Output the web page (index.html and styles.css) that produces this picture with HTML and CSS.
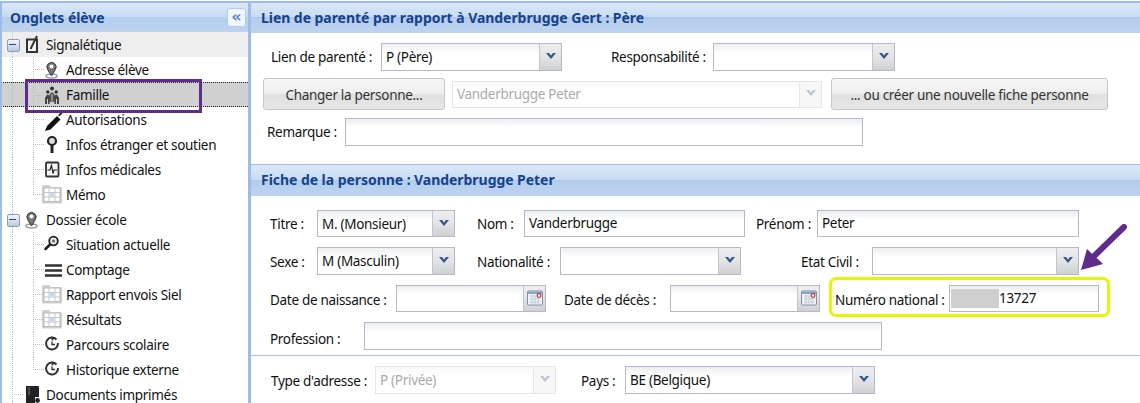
FILE: index.html
```html
<!DOCTYPE html>
<html lang="fr">
<head>
<meta charset="utf-8">
<title>Onglets élève</title>
<link rel="stylesheet" href="styles.css">
</head>
<body>
<svg class="sprite" xmlns="http://www.w3.org/2000/svg">
  <symbol id="i-sign" viewBox="0 0 20 20" overflow="visible"><rect x="3" y="4.5" width="10" height="12.500" fill="#f4f4f4" stroke="#333" stroke-width="2"/><path d="M6.500 14 L13 1" stroke="#333" stroke-width="2" fill="none"/></symbol>
  <symbol id="i-pin" viewBox="0 0 20 20" overflow="visible"><ellipse cx="7.500" cy="16" rx="5.500" ry="2" fill="none" stroke="#999" stroke-width="1.500"/><path d="M7.500 16 L3.600 9.500 A4.600 4.600 0 1 1 11.400 9.500 Z" fill="#777" stroke="#333" stroke-width="1"/><circle cx="7.500" cy="6.500" r="2" fill="#fff"/></symbol>
  <symbol id="i-fam" viewBox="0 0 20 20" overflow="visible"><circle cx="8" cy="3.500" r="2" fill="#333"/><path d="M5 11 Q8 3.500 11 11 L10.500 17 H5.500 Z" fill="#555"/><circle cx="3.800" cy="7" r="1.700" fill="#333"/><path d="M1 19 V13 Q3.500 6.500 6 12 L5.500 19 H4 V14 H3 V19 Z" fill="#444"/><circle cx="12.200" cy="7" r="1.700" fill="#333"/><path d="M10 12 Q12.500 6.500 15 13 V19 H13 V14 H12 V19 H10.500 Z" fill="#444"/><path d="M8 9 V17" stroke="#ddd" stroke-width=".8"/></symbol>
  <symbol id="i-mark" viewBox="0 0 20 20" overflow="visible"><path d="M1 21 L3 16 L13 6 L16.500 9.500 L6.500 19.500 Z" fill="#111"/><path d="M14 5 L17 2 L18.500 3.500 L15.500 6.500 Z" fill="#333"/></symbol>
  <symbol id="i-key" viewBox="0 0 20 20" overflow="visible"><circle cx="8" cy="6" r="4" fill="#ddd" stroke="#222" stroke-width="2.200"/><path d="M8 10 V18" stroke="#222" stroke-width="3"/></symbol>
  <symbol id="i-med" viewBox="0 0 20 20" overflow="visible"><rect x="2" y="2.500" width="12.500" height="14" rx="1" fill="#f4f4f4" stroke="#333" stroke-width="1.800"/><path d="M3.500 10 H6 L7.500 5.500 L9 13.500 L10 10 H13" fill="none" stroke="#222" stroke-width="1.200"/></symbol>
  <symbol id="i-table" viewBox="0 0 20 20" overflow="visible"><path d="M-2 2 Q-2 0 0 0 H5 L7 2 H17 Q18 2 18 3 V17 Q18 18.500 17 18.500 H-1 Q-2 18.500 -2 17 Z" fill="#cfcfcf"/><rect x="0" y="3" width="16" height="13.500" fill="#fff" stroke="#bbb"/><path d="M5 3 V16.500 M11 3 V16.500 M0 7.500 H16 M0 12 H16" stroke="#c8c8c8"/><rect x="5.500" y="8" width="5" height="3.500" fill="#c5d8f4"/></symbol>
  <symbol id="i-mag" viewBox="0 0 20 20" overflow="visible"><circle cx="9.500" cy="6" r="4.300" fill="#e8e8e8" stroke="#222" stroke-width="1.800"/><circle cx="9.500" cy="6" r="1.500" fill="#666"/><path d="M6 9.500 L1.500 14" stroke="#222" stroke-width="2.600" stroke-linecap="round"/></symbol>
  <symbol id="i-bars" viewBox="0 0 20 20" overflow="visible"><path d="M1 5.500 H18 M1 10.500 H18 M1 15.500 H18" stroke="#333" stroke-width="2.600"/></symbol>
  <symbol id="i-clock" viewBox="0 0 20 20" overflow="visible"><path d="M12.500 4.500 A6 6 0 1 0 14 8" fill="none" stroke="#333" stroke-width="2"/><path d="M7 1.500 L11 3 L8 6 Z" fill="#333"/><path d="M8 6.500 V9.500 H11" fill="none" stroke="#333" stroke-width="1.300"/></symbol>
  <symbol id="i-doc" viewBox="0 0 20 20" overflow="visible"><path d="M2 1 H14 Q15 1 15 2 V12 H11 V19 H2 Z" fill="#222"/><path d="M5 2 V10" stroke="#777" stroke-width="1"/><circle cx="13.500" cy="15.500" r="2.400" fill="#222"/></symbol>
  <symbol id="i-chev" viewBox="0 0 12 8"><path d="M1 1 H4 L6 3.500 L8 1 H11 L6 7 Z" fill="#35558c"/></symbol>
  <symbol id="i-cal" viewBox="0 0 16 16"><rect x=".5" y="1" width="15" height="14" rx="1" fill="#eef1f6" stroke="#7f92ad"/><rect x="1" y="1.500" width="14" height="2.500" fill="#8ca2c2"/><path d="M3 6 H13 M3 9 H13 M3 12 H13 M5 5 V14 M8 5 V14 M11 5 V14" stroke="#c3ccd8"/><circle cx="12" cy="5.500" r="1.800" fill="#fff" stroke="#c33" stroke-width="1.200"/></symbol>
</svg>

<div class="app">
  <aside class="side">
    <header class="side-head">
      <h2 class="side-title">Onglets élève</h2>
      <button class="collapse" type="button">«</button>
    </header>
    <ul class="tree">
      <li class="node top hover"><span class="e1 box"></span><svg class="ico"><use href="#i-sign"/></svg><span>Signalétique</span></li>
      <li class="node"><span class="e1"></span><span class="e2"></span><svg class="ico"><use href="#i-pin"/></svg><span>Adresse élève</span></li>
      <li class="node selected"><span class="e1"></span><span class="e2"></span><svg class="ico"><use href="#i-fam"/></svg><span>Famille</span></li>
      <li class="node"><span class="e1"></span><span class="e2"></span><svg class="ico"><use href="#i-mark"/></svg><span>Autorisations</span></li>
      <li class="node"><span class="e1"></span><span class="e2"></span><svg class="ico"><use href="#i-key"/></svg><span>Infos étranger et soutien</span></li>
      <li class="node"><span class="e1"></span><span class="e2"></span><svg class="ico"><use href="#i-med"/></svg><span>Infos médicales</span></li>
      <li class="node"><span class="e1"></span><span class="e2 end"></span><svg class="ico"><use href="#i-table"/></svg><span>Mémo</span></li>
      <li class="node top"><span class="e1 box"></span><svg class="ico"><use href="#i-pin"/></svg><span>Dossier école</span></li>
      <li class="node"><span class="e1"></span><span class="e2"></span><svg class="ico"><use href="#i-mag"/></svg><span>Situation actuelle</span></li>
      <li class="node"><span class="e1"></span><span class="e2"></span><svg class="ico"><use href="#i-bars"/></svg><span>Comptage</span></li>
      <li class="node"><span class="e1"></span><span class="e2"></span><svg class="ico"><use href="#i-table"/></svg><span>Rapport envois Siel</span></li>
      <li class="node"><span class="e1"></span><span class="e2"></span><svg class="ico"><use href="#i-table"/></svg><span>Résultats</span></li>
      <li class="node"><span class="e1"></span><span class="e2"></span><svg class="ico"><use href="#i-clock"/></svg><span>Parcours scolaire</span></li>
      <li class="node"><span class="e1"></span><span class="e2 end"></span><svg class="ico"><use href="#i-clock"/></svg><span>Historique externe</span></li>
      <li class="node top"><span class="e1 tee"></span><svg class="ico"><use href="#i-doc"/></svg><span>Documents imprimés</span></li>
    </ul>
  </aside>

  <main class="main">
    <section>
      <h2 class="sec-head">Lien de parenté par rapport à Vanderbrugge Gert : Père</h2>
      <div class="sec-body sb-1">
        <div class="row r-lien">
          <label>Lien de parenté :</label>
          <div class="combo h28"><span class="val">P (Père)</span><span class="trig"><svg class="chev"><use href="#i-chev"/></svg></span></div>
          <label class="c4">Responsabilité :</label>
          <div class="combo h28"><span class="val"></span><span class="trig"><svg class="chev"><use href="#i-chev"/></svg></span></div>
        </div>
        <div class="row r-person">
          <button class="btn" type="button">Changer la personne...</button>
          <div class="combo off h27"><span class="val">Vanderbrugge Peter</span><span class="trig"><svg class="chev"><use href="#i-chev"/></svg></span></div>
          <button class="btn" type="button">... ou créer une nouvelle fiche personne</button>
        </div>
        <div class="row r-rem">
          <label>Remarque :</label>
          <div class="field h28"></div>
        </div>
      </div>
    </section>

    <section>
      <h2 class="sec-head second">Fiche de la personne : Vanderbrugge Peter</h2>
      <div class="sec-body sb-2">
        <div class="row r-titre">
          <label>Titre :</label>
          <div class="combo h27"><span class="val">M. (Monsieur)</span><span class="trig"><svg class="chev"><use href="#i-chev"/></svg></span></div>
          <label class="c3">Nom :</label>
          <div class="field h27">Vanderbrugge</div>
          <label class="c5">Prénom :</label>
          <div class="field h27">Peter</div>
        </div>
        <div class="row r-sexe">
          <label>Sexe :</label>
          <div class="combo h28"><span class="val">M (Masculin)</span><span class="trig"><svg class="chev"><use href="#i-chev"/></svg></span></div>
          <label class="c3">Nationalité :</label>
          <div class="combo h28"><span class="val"></span><span class="trig"><svg class="chev"><use href="#i-chev"/></svg></span></div>
          <label class="c5">Etat Civil :</label>
          <div class="combo h28"><span class="val"></span><span class="trig"><svg class="chev"><use href="#i-chev"/></svg></span></div>
        </div>
        <div class="row r-dates">
          <label>Date de naissance :</label>
          <div class="combo h27"><span class="val"></span><span class="trig"><svg class="cal"><use href="#i-cal"/></svg></span></div>
          <label class="c3">Date de décès :</label>
          <div class="combo h27"><span class="val"></span><span class="trig"><svg class="cal"><use href="#i-cal"/></svg></span></div>
          <label class="c5">Numéro national :</label>
          <div class="field h27 nn"><span class="mask"></span>13727</div>
        </div>
        <div class="row r-prof">
          <label class="low">Profession :</label>
          <div class="field h28"></div>
        </div>
      </div>
      <div class="sec-foot">
        <div class="row r-addr">
          <label>Type d'adresse :</label>
          <div class="combo off h28"><span class="val">P (Privée)</span><span class="trig"><svg class="chev"><use href="#i-chev"/></svg></span></div>
          <label class="c3">Pays :</label>
          <div class="combo h28"><span class="val">BE (Belgique)</span><span class="trig"><svg class="chev"><use href="#i-chev"/></svg></span></div>
        </div>
      </div>
    </section>
  </main>

  <div class="mark-family"></div>
  <div class="mark-national"></div>
  <svg class="mark-arrow" viewBox="0 0 60 60"><path d="M45 3 L10 37" stroke="#5f2b8c" stroke-width="6" stroke-linecap="round" fill="none"/><path d="M2 46 L8 25 L24 40 Z" fill="#5f2b8c"/></svg>
</div>
</body>
</html>
```

FILE: styles.css
```css
* { box-sizing: border-box; }
html, body { margin: 0; padding: 0; }
body {
  width: 1140px;
  height: 403px;
  overflow: hidden;
  background: #fff;
  color: #111;
  font-family: "Noto Sans", "DejaVu Sans", sans-serif;
  font-size: 13.5px;
  line-height: 18px;
  letter-spacing: -0.3px;
}
.sprite { display: none; }

.app {
  position: relative;
  display: flex;
  width: 1140px;
  height: 403px;
  padding-top: 1px;
  overflow: hidden;
}

/* left panel */
.side {
  flex: 0 0 251px;
  height: 402px;
  border-top: 2px solid #9dbde8;
  border-left: 2px solid #9dbde8;
  border-right: 3px solid #9dbde8;
  background: #fff;
  overflow: hidden;
}
.side-head {
  display: flex;
  align-items: center;
  justify-content: space-between;
  height: 29px;
  padding: 0 2px 0 8px;
  background: linear-gradient(#dbe7f7 0, #c7daf2 48%, #b6cfee 50%, #bdd3f0 100%);
}
.side-title {
  margin: 0;
  font-size: 14px;
  font-weight: 700;
  letter-spacing: -0.05px;
  color: #15428b;
}
.collapse {
  width: 19px;
  height: 19px;
  padding: 0 0 3px;
  border: 1px solid #b3cbea;
  border-radius: 3px;
  background: #f2f6fc;
  color: #5d86c0;
  font: 700 16px/1 "DejaVu Sans", sans-serif;
}
.tree { list-style: none; margin: 0; padding: 0; }
.node {
  display: flex;
  align-items: center;
  height: 25px;
  margin-left: -2px;
}
.node.hover { background: #eeeeee; }
.node.selected {
  background: #d0d0d0;
  border-top: 1px dotted #222;
  border-bottom: 1px dotted #222;
}
.e1, .e2 {
  position: relative;
  flex: none;
  align-self: stretch;
}
.e1 {
  width: 24px;
  background: repeating-linear-gradient(#bbb 0 1px, transparent 1px 2px) 12px 0 / 1px 100% no-repeat;
}
.e2 {
  width: 20px;
  background:
    repeating-linear-gradient(#bbb 0 1px, transparent 1px 2px) 9px 0 / 1px 100% no-repeat,
    repeating-linear-gradient(90deg, #bbb 0 1px, transparent 1px 2px) 9px 12px / 11px 1px no-repeat;
}
.e2.end {
  background:
    repeating-linear-gradient(#bbb 0 1px, transparent 1px 2px) 9px 0 / 1px 13px no-repeat,
    repeating-linear-gradient(90deg, #bbb 0 1px, transparent 1px 2px) 9px 12px / 11px 1px no-repeat;
}
.e1.tee {
  background:
    repeating-linear-gradient(#bbb 0 1px, transparent 1px 2px) 12px 0 / 1px 100% no-repeat,
    repeating-linear-gradient(90deg, #bbb 0 1px, transparent 1px 2px) 12px 12px / 12px 1px no-repeat;
}
.e1.box::before {
  content: "";
  position: absolute;
  left: 7px;
  top: 7px;
  width: 11px;
  height: 11px;
  border: 1px solid #8a9fbd;
  border-radius: 2px;
  background: linear-gradient(#f4f7fb, #b9c8de);
}
.e1.box::after {
  content: "";
  position: absolute;
  left: 9px;
  top: 12px;
  width: 7px;
  height: 1px;
  background: #2f4a73;
}
.ico {
  flex: none;
  width: 20px;
  height: 20px;
  margin-right: 2px;
  overflow: visible;
}

/* right panel */
.main {
  flex: 1;
  min-width: 0;
  height: 402px;
}
.sec-head {
  height: 32px;
  margin: 0;
  padding: 6px 0 0 10px;
  border-top: 2px solid #9dbde8;
  background: linear-gradient(#dbe7f7 0, #c9dcf3 48%, #abc7eb 48%, #b5ceee 53%, #bdd3f0 100%);
  color: #15428b;
  font-size: 14px;
  font-weight: 700;
  letter-spacing: -0.05px;
  line-height: 18px;
}
.sec-head.second { border-top-width: 1px; height: 32px; }
.sec-body { height: 131px; }
.sb-1 { height: 131px; padding-top: 10px; }
.sb-2 { height: 160px; padding-top: 14px; border-left: 1px solid #9dbde8; margin-left: -1px; border-bottom: 1px solid #a7c3ea; }
.sec-foot { padding-top: 10px; }

.row { display: grid; align-items: center; }
.r-lien { margin-left: 20px; grid-template-columns: 110px 181px 49px 102px 182px; }
.r-lien .c4 { grid-column: 4; }
.r-person { margin: 7px 0 0 12px; grid-template-columns: 182px 370px 279px; column-gap: 7px; }
.r-person .btn:last-child { margin-left: 2px; }
.r-rem { margin: 8px 0 0 16px; grid-template-columns: 78px 518px; }

.r-titre, .r-sexe, .r-dates, .r-prof { margin-left: 19px; }
.r-titre { grid-template-columns: 47px 138px 22px 47px 221px 11px 61px 262px; }
.r-sexe { grid-template-columns: 47px 138px 22px 83px 181px 60px 71px 207px; margin-top: 10px; }
.r-dates { grid-template-columns: 126px 150px 18px 106px 150px 15px 114px 150px; margin-top: 10px; }
.r-prof { grid-template-columns: 94px 518px; margin-top: 10px; }
.r-addr { margin-left: 20px; grid-template-columns: 104px 181px 25px 44px 250px; }
.c3 { grid-column: 4; }
.c5 { grid-column: 7; }

label { white-space: nowrap; }
.low { padding-top: 5px; }
.r-sexe label, .r-dates label, .r-addr label { padding-top: 2px; }

.h27 { height: 27px; }
.h28 { height: 28px; }

.field, .combo {
  border: 1px solid #b5b8c8;
  background: linear-gradient(#eceef0 0, #ffffff 9px);
}
.field {
  padding: 0 0 1px 4px;
  display: flex;
  align-items: center;
}
.combo {
  display: flex;
  align-items: stretch;
}
.val {
  flex: 1;
  min-width: 0;
  display: flex;
  align-items: center;
  padding: 0 0 0 4px;
  white-space: nowrap;
}
.trig {
  flex: 0 0 22px;
  display: flex;
  align-items: center;
  justify-content: center;
  border-left: 1px solid #c2c5cf;
  background: linear-gradient(#eeeeee 0, #e2e4e6 50%, #cfd0d2 100%);
}
.chev { width: 12px; height: 8px; margin-top: -2px; }
.cal { width: 16px; height: 16px; margin-top: -2px; }
.off { border-color: #e6e6e6; background: linear-gradient(#f8f8f8, #ffffff 9px); color: #aaa; }
.off .trig { background: #f7f7f7; border-left-color: #e6e6e6; }
.off .chev { opacity: .3; }

.btn {
  height: 32px;
  padding: 1px 0 0;
  border: 1px solid #c6c6c6;
  border-radius: 3px;
  background: linear-gradient(#f6f6f6 0, #efefef 50%, #e0e0e0 50%, #e6e6e6 100%);
  color: #333;
  font: inherit;
  letter-spacing: inherit;
}

.nn { padding-left: 0; }
.mask {
  flex: none;
  width: 48px;
  height: 19px;
  margin-left: 1px;
  background: #cfcfcf;
}

/* annotations laid over the screenshot */
.mark-family {
  position: absolute;
  left: 25px;
  top: 79px;
  width: 177px;
  height: 34px;
  border: 3px solid #5f2b8c;
}
.mark-national {
  position: absolute;
  left: 829px;
  top: 277px;
  width: 281px;
  height: 40px;
  border: 3px solid #e3f700;
  border-radius: 7px;
}
.mark-arrow {
  position: absolute;
  left: 1079px;
  top: 224px;
  width: 60px;
  height: 60px;
}
```
